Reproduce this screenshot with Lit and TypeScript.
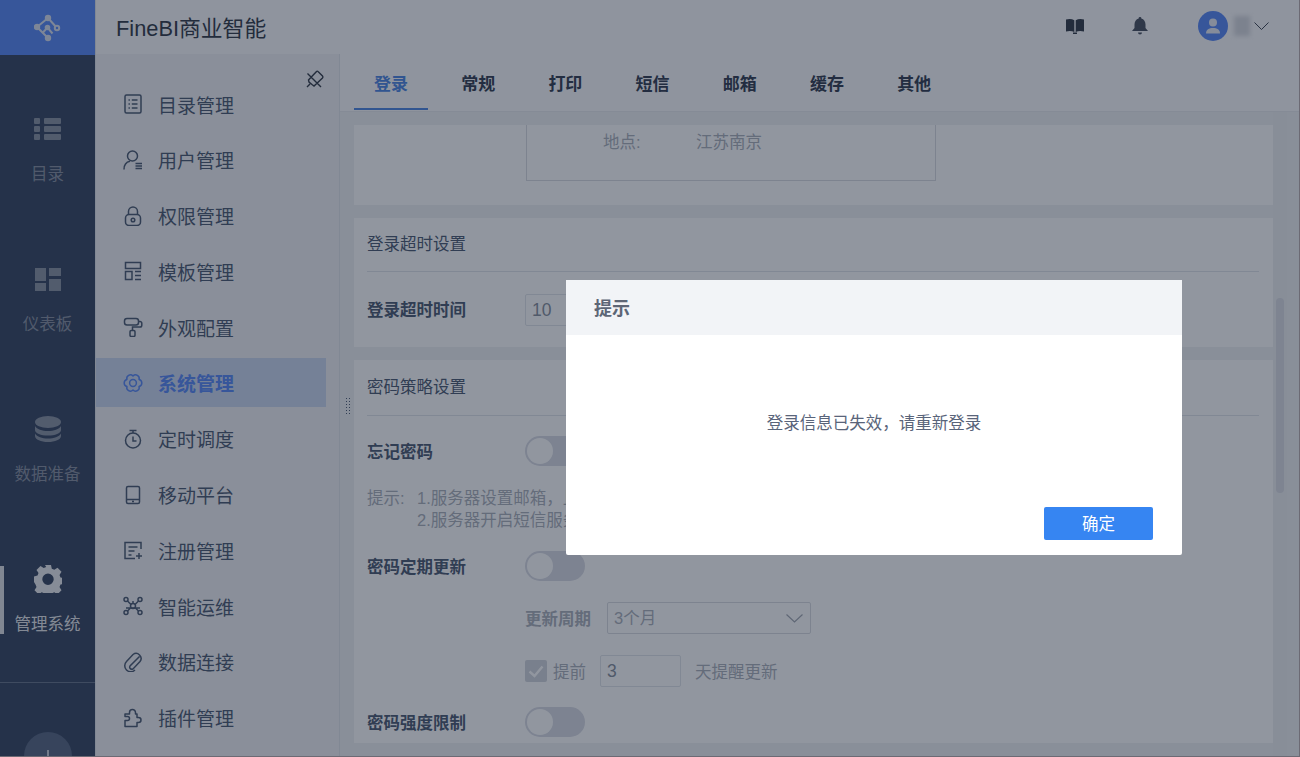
import { LitElement, html, css, svg } from "lit";
import { customElement } from "lit/decorators.js";

const menuIcons: Record<string, unknown> = {
  list: svg`<rect x="2" y="1" width="16" height="18" rx="1.500"/><path d="M5.500 6h1.400M8.800 6h5.700M5.500 10h1.400M8.800 10h5.700M5.500 14h1.400M8.800 14h5.700"/>`,
  user: svg`<circle cx="9.500" cy="6" r="5"/><path d="M1 19.500c0-4.500 2.500-7.500 6-8.200M12.500 13.500h6.500M12.500 16h6.500M12.500 18.500h6.500"/>`,
  lock: svg`<path d="M5.500 8.500V5.500a4.500 4.500 0 0 1 9 0V8.500"/><rect x="2.500" y="8.500" width="15" height="11" rx="3.500"/><circle cx="10" cy="14" r="1.800"/>`,
  tpl: svg`<path d="M2.500 1.500h15v6h-15zM2.500 10.500h6.500v8h-6.500zM12 10.500h6M12 14.500h6M12 18.500h6"/>`,
  roller: svg`<rect x="1.500" y="1.500" width="14" height="6.500" rx="2.500"/><path d="M15.500 4.500h1.500a1.800 1.800 0 0 1 1.800 1.800v2a1.800 1.800 0 0 1-1.800 1.800H9.500v3.400"/><rect x="7" y="13.500" width="5" height="6" rx="1.200"/>`,
  gear: svg`<path d="M10 3A3.600 3.600 0 0 1 16.060 6.500 3.600 3.600 0 0 1 16.060 13.500 3.600 3.600 0 0 1 10 17 3.600 3.600 0 0 1 3.940 13.500 3.600 3.600 0 0 1 3.940 6.500 3.600 3.600 0 0 1 10 3z" stroke-linejoin="round"/><circle cx="10" cy="10" r="3.400"/>`,
  timer: svg`<circle cx="10" cy="11.500" r="7.500"/><path d="M6.500 1.500h7M10 1.500v2.500M10 7.500v4.500h3.500"/>`,
  mobile: svg`<rect x="3.500" y="1.500" width="13" height="17" rx="1.500"/><path d="M3.500 14.500h13M9 16.500h2"/>`,
  reg: svg`<path d="M18 9V2.500H2v16h10"/><path d="M5.500 7h9M5.500 11h6M5.500 15h3M13 16h6M16 13v6"/>`,
  ops: svg`<circle cx="3" cy="3.500" r="2"/><circle cx="17" cy="3.500" r="2"/><circle cx="3" cy="16.500" r="2"/><circle cx="17" cy="16.500" r="2"/><circle cx="10" cy="10" r="2.500"/><path d="M4.500 5l3.500 3.500M15.500 5L12 8.500M4.500 15L8 11.500M15.500 15L12 11.500M10 7.500V5M3 12h14"/>`,
  clip: svg`<path d="M16.500 4.500L7 14a2.200 2.200 0 0 0 3 3l7-7.500a5 5 0 0 0-7-7L3.500 9.500a6 6 0 0 0 8.500 8.500"/>`,
  plugin: svg`<path d="M2 12.500h2.500a2 2 0 1 0 0-4H2V6h4.500V4.500a3 3 0 0 1 6 0V6h1.500v3.500h1.500a2.500 2.500 0 0 1 0 5H14V18.500H2z" stroke-linejoin="round"/>`,
};

const menu = [
  ["目录管理", "list"], ["用户管理", "user"], ["权限管理", "lock"], ["模板管理", "tpl"],
  ["外观配置", "roller"], ["系统管理", "gear"], ["定时调度", "timer"], ["移动平台", "mobile"],
  ["注册管理", "reg"], ["智能运维", "ops"], ["数据连接", "clip"], ["插件管理", "plugin"],
];

const navIcons: Record<string, unknown> = {
  list: svg`<g fill="currentColor"><rect x="0" y="0" width="6" height="6" rx="1"/><rect x="10" y="0" width="17" height="6" rx="1"/><rect x="0" y="8" width="6" height="6" rx="1"/><rect x="10" y="8" width="17" height="6" rx="1"/><rect x="0" y="16" width="6" height="6" rx="1"/><rect x="10" y="16" width="17" height="6" rx="1"/></g>`,
  dash: svg`<g fill="currentColor"><rect x="0" y="0" width="11" height="13"/><rect x="14" y="0" width="12" height="8"/><rect x="0" y="15" width="11" height="8"/><rect x="14" y="11" width="12" height="12"/></g>`,
  db: svg`<g fill="currentColor"><ellipse cx="13" cy="6" rx="13" ry="6"/><path d="M0 10c2 3.500 7 5 13 5s11-1.500 13-5v4c0 3.500-6 5.500-13 5.500S0 17.500 0 14z"/><path d="M0 17.500c2 3.500 7 5 13 5s11-1.500 13-5V20c0 3.500-6 6-13 6S0 23.500 0 20z"/></g>`,
  gear: svg`<path fill="currentColor" fill-rule="evenodd" d="M11 0h6l.8 3.700 2.500 1 3.200-2 4 4-2 3.200 1 2.500 3.500.8v5.600l-3.500.8-1 2.500 2 3.200-4 4-3.200-2-2.500 1-.8 3.500h-6l-.8-3.500-2.500-1-3.200 2-4-4 2-3.200-1-2.500L0 17V11.400l3.500-.8 1-2.500-2-3.200 4-4 3.200 2 2.500-1zM14 8.500a5.700 5.700 0 1 0 0 11.400 5.700 5.700 0 0 0 0-11.400z"/>`,
};

@customElement("app-root")
export class AppRoot extends LitElement {
  static styles = css`
    :host {
      display: block;
      width: 1300px;
      height: 757px;
      overflow: hidden;
      position: relative;
      font-family: "Liberation Sans", "Noto Sans CJK SC", sans-serif;
      color: #3d4d66;
      background: #fff;
    }
    * { box-sizing: border-box; }
    .app { display: flex; width: 100%; height: 100%; }

    .nav { width: 95px; flex: none; height: 100%; background: #263654; display: flex; flex-direction: column; overflow: hidden; }
    .logo { height: 55px; flex: none; background: #4a7ef5; display: flex; align-items: center; justify-content: center; }
    .navlist { display: flex; flex-direction: column; gap: 82px; padding-top: 61px; }
    .navitem { height: 68px; flex: none; position: relative; display: flex; flex-direction: column; align-items: center; justify-content: space-between; color: rgba(255,255,255,.42); font-size: 16.500px; line-height: 20px; }
    .navitem.on { color: rgba(255,255,255,.9); }
    .navitem.on::before { content: ""; position: absolute; left: 0; top: 0; bottom: 0; width: 4px; background: #fff; opacity: .85; }
    .navitem svg { display: block; }
    .navicon { height: 30px; display: flex; align-items: center; justify-content: center; margin-top: -2px; }
    .navdiv { margin-top: 48px; height: 1px; background: #5b6880; flex: none; }
    .add { width: 48px; height: 48px; flex: none; border-radius: 50%; background: #4a5a78; margin: 49px auto 0; display: flex; align-items: flex-start; justify-content: center; padding-top: 16px; }

    .main { flex: 1; min-width: 0; display: flex; flex-direction: column; border-left: 1px solid #dfe2e8; }
    .top { height: 54px; flex: none; background: #fafafc; display: flex; align-items: center; padding: 0 31px 2px 20px; }
    .title { font-size: 21.800px; color: #222a38; flex: 1; }
    .topicons { display: flex; align-items: center; }
    .topicons .i1 { margin-right: 47px; }
    .topicons .i2 { margin-right: 50px; }
    .avatar { width: 30px; height: 30px; border-radius: 50%; background: #4a7ef5; display: flex; align-items: center; justify-content: center; }
    .blur { width: 16px; height: 20px; margin: 0 4px 0 6px; background: #d4d6dc; filter: blur(2px); }

    .body { flex: 1; display: flex; min-height: 0; }
    .menu { width: 244px; flex: none; background: #f0f1f4; position: relative; padding-top: 25.500px; border-right: 1px solid #dfe2e8; }
    .pin { position: absolute; left: 209px; top: 15px; color: #222a38; }
    .mitem { width: 230px; height: 49px; margin-bottom: 6.800px; display: flex; align-items: center; padding-left: 27px; font-size: 19px; color: #3d4d66; }
    .mitem svg { fill: none; stroke: currentColor; stroke-width: 1.500; flex: none; margin-right: 15px; }
    .mitem.on { background: #c7d4ee; color: #4a7ef5; font-weight: 700; }

    .right { flex: 1; min-width: 0; display: flex; flex-direction: column; position: relative; }
    .tabs { height: 58px; flex: none; background: #fafafc; border-bottom: 1px solid #e6e8ec; display: flex; gap: 13.200px; padding-left: 14px; }
    .tab { width: 74px; height: 56px; display: flex; align-items: center; justify-content: center; font-size: 17px; font-weight: 700; color: #222d42; border-bottom: 2px solid transparent; padding-top: 3px; }
    .tab.on { color: #3e7ce0; border-bottom-color: #3e7ce0; }

    .scroller { flex: 1; min-height: 0; background: #eef0f3; padding: 13px 0 0 14px; position: relative; overflow: hidden; font-size: 16.500px; }
    .dots { position: absolute; left: 5px; top: 285px; width: 6px; height: 17px; background-image: radial-gradient(circle, #3d4d66 .9px, transparent 1px); background-size: 3px 3px; }
    .track { position: absolute; left: 933px; top: 0; bottom: 0; width: 14px; background: #eceef1; }
    .thumb { position: absolute; left: 936px; top: 186px; width: 8px; height: 195px; border-radius: 4px; background: #d8dae2; }

    .card { width: 919px; background: #fff; padding: 0 14px 0 13px; margin-bottom: 13px; }
    .c1 { height: 80px; padding-left: 172px; }
    .box { width: 410px; height: 56px; border: 1px solid #d6d9df; border-top: 0; display: flex; padding: 5px 0 0 76px; color: #a4aab5; line-height: 24px; }
    .box span:first-child { width: 93px; }
    .c2 { height: 129px; }
    .c3 { height: 383px; }
    .ctitle { height: 54px; border-bottom: 1px solid #dfe2e8; display: flex; align-items: center; padding-bottom: 3px; color: #3d4d66; }
    .c3 .ctitle { height: 56px; padding-bottom: 3px; }
    .row { display: flex; align-items: center; height: 32px; }
    .lab { width: 158px; flex: none; font-weight: 700; color: #3d4d66; padding-bottom: 2px; }
    .input { border: 1px solid #dfe2e8; border-radius: 2px; height: 32px; padding-left: 6px; display: flex; align-items: center; color: #7d8694; font-size: 17.500px; }
    .toggle { width: 60px; height: 30px; border-radius: 15px; background: #d6d8e2; padding: 2px; flex: none; margin-top: -2px; }
    .toggle i { display: block; width: 26px; height: 26px; border-radius: 50%; background: #fff; }
    .hint { display: grid; grid-template-columns: 50px 1fr; line-height: 22px; color: #a4aab5; margin-top: 19px; }
    .sub { padding-left: 158px; color: #a4aab5; }
    .sublab { width: 82px; font-weight: 700; flex: none; padding-bottom: 1px; }
    .select { width: 204px; height: 32px; border: 1px solid #d6d9df; border-radius: 2px; display: flex; align-items: center; justify-content: space-between; padding: 0 7px 3px 6px; }
    .select svg { margin-top: 3px; }
    .check { width: 22px; height: 22px; border-radius: 2px; background: #cfd2da; display: flex; align-items: center; justify-content: center; margin-right: 6px; flex: none; }
    .mt20 { margin-top: 20px; }
    .mt19 { margin-top: 19px; }
    .mt21 { margin-top: 21px; }
    .mt22 { margin-top: 22px; }

    .overlay { position: absolute; inset: 0 1px 1px 0; background: rgba(36,46,64,.5); }
    .edge { position: absolute; inset: 0; border-right: 1px solid #6c6a74; border-bottom: 1px solid #6c6a74; pointer-events: none; }
    .modal { position: absolute; left: 566px; top: 280px; width: 616px; height: 275px; background: #fff; border-radius: 2px; display: flex; flex-direction: column; }
    .mhead { height: 55px; flex: none; background: #f2f4f7; display: flex; align-items: center; padding: 0 0 2px 28px; font-size: 18px; font-weight: 700; color: #5d6676; }
    .mbody { flex: 1; display: flex; align-items: center; justify-content: center; font-size: 16.500px; color: #59647a; padding-top: 2px; }
    .mfoot { height: 48px; flex: none; display: flex; justify-content: flex-end; padding-right: 29px; }
    .btn { width: 109px; height: 33px; background: #3685f2; border-radius: 2px; color: #fff; font-size: 16.500px; display: flex; align-items: center; justify-content: center; padding-bottom: 2px; }
  `;

  private nav(label: string, icon: string, w: number, h: number, on = false) {
    const vb = icon === "gear" ? "0 0 28 28" : `0 0 ${w} ${h}`;
    return html`<div class="navitem ${on ? "on" : ""}">
      <div class="navicon"><svg width=${w} height=${h} viewBox=${vb}>${navIcons[icon]}</svg></div>
      <div>${label}</div>
    </div>`;
  }

  render() {
    return html`
      <div class="app">
        <div class="nav">
          <div class="logo">
            <svg width="28" height="28" viewBox="0 0 28 28" fill="none" stroke="#d6deee" stroke-width="2">
              <path d="M14 4L3 13l11 11M14 4l9 10"/>
              <path d="M8.500 19l5-5.500 5 6"/>
              <circle cx="14" cy="4" r="2.200" fill="#d6deee"/><circle cx="14" cy="24" r="2.200" fill="#d6deee"/>
              <circle cx="3" cy="13" r="2.200" fill="#d6deee"/><circle cx="23" cy="14" r="2.200" fill="#4a7ef5"/>
              <circle cx="13.500" cy="13.500" r="1.800" fill="#d6deee"/>
            </svg>
          </div>
          <div class="navlist">
            ${this.nav("目录", "list", 27, 22)}
            ${this.nav("仪表板", "dash", 26, 23)}
            ${this.nav("数据准备", "db", 26, 26)}
            ${this.nav("管理系统", "gear", 28, 28, true)}
          </div>
          <div class="navdiv"></div>
          <div class="add">
            <svg width="20" height="20" viewBox="0 0 20 20" fill="none" stroke="#c2c8d4" stroke-width="2"><path d="M10 2v16M2 10h16"/></svg>
          </div>
        </div>
        <div class="main">
          <div class="top">
            <div class="title">FineBI商业智能</div>
            <div class="topicons">
              <svg class="i1" width="20" height="16" viewBox="0 0 20 16" fill="#222a38"><path d="M1 1.500C4 .500 7 .800 9.300 2.200V14C7 12.800 4 12.600 1 13.500zM19 1.500C16 .500 13 .800 10.700 2.200V14C13 12.800 16 12.600 19 13.500zM8 14.500h4V16H8z"/></svg>
              <svg class="i2" width="16" height="18" viewBox="0 0 16 18" fill="#3a4252"><path d="M8 0a1.300 1.300 0 0 1 1.300 1.500C12 2.300 13.500 4.500 13.500 7.500V11L16 14H0l2.500-3V7.500C2.500 4.500 4 2.300 6.700 1.500A1.300 1.300 0 0 1 8 0zM6 15.500h4a2 2 0 0 1-4 0z"/></svg>
              <div class="avatar">
                <svg width="16" height="16" viewBox="0 0 16 16" fill="#e6ebf5"><circle cx="8" cy="4.500" r="4"/><path d="M1 15.500c0-4 3-5.500 7-5.500s7 1.500 7 5.500z"/></svg>
              </div>
              <div class="blur"></div>
              <svg width="15" height="8" viewBox="0 0 15 8" fill="none" stroke="#2f3645" stroke-width="1"><path d="M.5.500L7.500 7.500l7-7"/></svg>
            </div>
          </div>
          <div class="body">
            <div class="menu">
              <svg class="pin" width="20" height="20" viewBox="0 0 20 20" fill="none" stroke="currentColor" stroke-width="1.400">
                <path d="M13 2.500l4.500 4.500a1.500 1.500 0 0 1 0 2L9 17l-2-1.500L4 13l-.5-2L11.500 2.500a1 1 0 0 1 1.500 0zM2.500 4.500l13.500 13.500M5 15l-3 3"/>
              </svg>
              ${menu.map(([t, ic]) => html`<div class="mitem ${t === "系统管理" ? "on" : ""}">
                <svg width="20" height="20" viewBox="0 0 20 20">${menuIcons[ic]}</svg><span>${t}</span>
              </div>`)}
            </div>
            <div class="right">
              <div class="tabs">
                ${["登录", "常规", "打印", "短信", "邮箱", "缓存", "其他"].map((t, i) => html`<div class="tab ${i === 0 ? "on" : ""}">${t}</div>`)}
              </div>
              <div class="scroller">
                <div class="dots"></div>
                <div class="track"></div>
                <div class="thumb"></div>
                <div class="card c1"><div class="box"><span>地点:</span><span>江苏南京</span></div></div>
                <div class="card c2">
                  <div class="ctitle">登录超时设置</div>
                  <div class="row mt22"><div class="lab">登录超时时间</div><div class="input" style="width:90px">10</div></div>
                </div>
                <div class="card c3">
                  <div class="ctitle">密码策略设置</div>
                  <div class="row mt20"><div class="lab">忘记密码</div><div class="toggle"><i></i></div></div>
                  <div class="hint"><span>提示:</span><span>1.服务器设置邮箱，且用户绑定邮箱</span><span></span><span>2.服务器开启短信服务，且用户绑定手机</span></div>
                  <div class="row mt20"><div class="lab">密码定期更新</div><div class="toggle"><i></i></div></div>
                  <div class="row mt19 sub"><div class="sublab">更新周期</div>
                    <div class="select"><span>3个月</span>
                      <svg width="17" height="9" viewBox="0 0 17 9" fill="none" stroke="#9aa0ab" stroke-width="1.200"><path d="M.5.500l8 7.500 8-7.500"/></svg>
                    </div>
                  </div>
                  <div class="row mt21 sub">
                    <div class="check"><svg width="16" height="13" viewBox="0 0 16 13" fill="none" stroke="#fff" stroke-width="2.400"><path d="M1.500 6.500l5 4.500 8-9.500"/></svg></div>
                    <span>提前</span>
                    <div class="input" style="width:81px;margin:0 14px">3</div>
                    <span>天提醒更新</span>
                  </div>
                  <div class="row mt20"><div class="lab">密码强度限制</div><div class="toggle"><i></i></div></div>
                </div>
              </div>
            </div>
          </div>
        </div>
      </div>
      <div class="overlay"></div>
      <div class="edge"></div>
      <div class="modal">
        <div class="mhead">提示</div>
        <div class="mbody">登录信息已失效，请重新登录</div>
        <div class="mfoot"><div class="btn">确定</div></div>
      </div>
    `;
  }
}
